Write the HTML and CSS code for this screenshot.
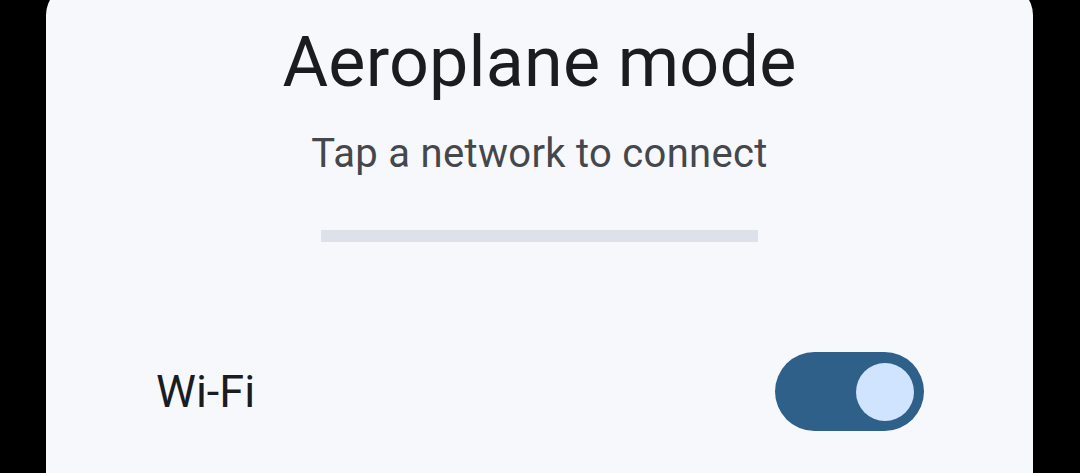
FILE: index.html
```html
<!DOCTYPE html>
<html>
<head>
<meta charset="utf-8">
<link rel="stylesheet" href="styles.css">
</head>
<body>
<div class="screen">
  <div class="card">
    <h1 class="title">Aeroplane mode</h1>
    <p class="subtitle">Tap a network to connect</p>
    <div class="progress"></div>
    <div class="row">
      <span class="row-label">Wi-Fi</span>
      <div class="switch"><div class="knob"></div></div>
    </div>
  </div>
</div>
</body>
</html>
```
FILE: styles.css
```css
html, body {
  margin: 0;
  padding: 0;
  background: #000;
  height: 100%;
  overflow: hidden;
}
.screen {
  padding: 0 47px 0 46px;
}
.card {
  margin-top: -15px;
  height: 488px;
  background: #f7f8fc;
  border-radius: 30px 30px 0 0;
  display: flex;
  flex-direction: column;
  align-items: center;
  font-family: Roboto, "Noto Sans", sans-serif;
}
.title {
  margin: 42px 0 0;
  font-size: 70px;
  font-weight: 400;
  line-height: 1;
  color: #1b1c1f;
  letter-spacing: 0.2px;
}
.subtitle {
  margin: 37px 0 0;
  font-size: 40px;
  line-height: 1;
  color: #44474c;
  letter-spacing: 0.3px;
}
.progress {
  margin-top: 56px;
  width: 437px;
  height: 12px;
  background: #dde1e9;
  flex-shrink: 0;
}
.row {
  align-self: stretch;
  display: flex;
  align-items: center;
  justify-content: space-between;
  padding: 0 109px 0 110px;
  margin-top: 110px;
}
.row-label {
  font-size: 45px;
  line-height: 1;
  color: #1b1c1f;
}
.switch {
  width: 149px;
  height: 79px;
  border-radius: 40px;
  background: #2f6089;
  display: flex;
  align-items: center;
  justify-content: flex-end;
  padding-right: 10px;
  box-sizing: border-box;
  flex-shrink: 0;
}
.knob {
  width: 58px;
  height: 58px;
  border-radius: 50%;
  background: #d1e4ff;
}
```
